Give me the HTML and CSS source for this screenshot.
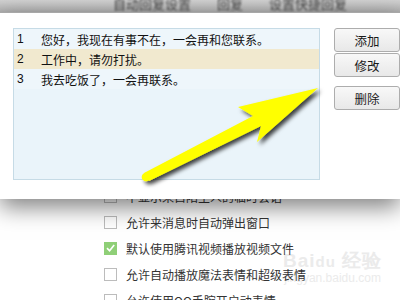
FILE: index.html
```html
<!DOCTYPE html>
<html lang="zh">
<head>
<meta charset="utf-8">
<link rel="stylesheet" href="styles.css">
</head>
<body>
<div class="screen">
  <div class="topbar"><span class="blurtext">自动回复设置　　回复　　设置快捷回复</span></div>
  <div class="dialog">
    <div class="listbox">
      <div class="row"><span class="num">1</span><span class="msg">您好，我现在有事不在，一会再和您联系。</span></div>
      <div class="row sel"><span class="num">2</span><span class="msg">工作中，请勿打扰。</span></div>
      <div class="row"><span class="num">3</span><span class="msg">我去吃饭了，一会再联系。</span></div>
    </div>
    <div class="buttons">
      <div class="btn">添加</div>
      <div class="btn">修改</div>
      <div class="btn gap">删除</div>
    </div>
  </div>
  <div class="page">
    <div class="watermark"><span class="wm1">Bai<b class="du">du</b> 经验</span><span class="wm2">jingyan.baidu.com</span></div>
    <div class="opt"><span class="cb"></span><span>不显示来自陌生人的临时会话</span></div>
    <div class="opt"><span class="cb"></span><span>允许来消息时自动弹出窗口</span></div>
    <div class="opt"><span class="cb on"><svg width="12" height="12" viewBox="0 0 12 12"><path d="M2.2 6.2 L5 9 L10 2.8" fill="none" stroke="#fff" stroke-width="1.8"/></svg></span><span>默认使用腾讯视频播放视频文件</span></div>
    <div class="opt"><span class="cb"></span><span>允许自动播放魔法表情和超级表情</span></div>
    <div class="opt"><span class="cb"></span><span>允许使用QQ手腕开启动表情</span></div>
  </div>
  <svg class="arrow" width="400" height="300" viewBox="0 0 400 300">
    <defs>
      <filter id="sh" x="-20%" y="-20%" width="140%" height="140%">
        <feDropShadow dx="3" dy="3" stdDeviation="2" flood-color="#000" flood-opacity="0.75"/>
      </filter>
    </defs>
    <g filter="url(#sh)" fill="#ffff00">
      <polygon points="318,88 238,107 253,116 144,173 149,181 261,126 257,142"/>
      <circle cx="146" cy="177" r="4.3"/>
    </g>
  </svg>
</div>
</body>
</html>
```
FILE: styles.css
```css
html, body {
  margin: 0;
  padding: 0;
}
body {
  width: 400px;
  height: 300px;
  overflow: hidden;
  background: #fff;
  font-family: "Noto Sans CJK SC", "Liberation Sans", sans-serif;
  font-size: 12px;
}
.screen {
  position: relative;
  width: 400px;
  height: 300px;
  overflow: hidden;
}
.topbar {
  height: 12px;
  background: linear-gradient(#d2d2d2, #b2b2b2);
  overflow: hidden;
  display: flex;
  justify-content: center;
}
.blurtext {
  color: #444;
  font-size: 13px;
  line-height: 8px;
  margin-left: 60px;
  filter: blur(1px);
  white-space: nowrap;
}
.dialog {
  position: relative;
  z-index: 2;
  height: 187px;
  background: #fff;
  box-shadow: 0 8px 22px rgba(0,0,0,0.5);
  display: flex;
  align-items: flex-start;
  padding: 15px 0 0 13px;
  box-sizing: border-box;
  border-top: 1px solid #a8a8a8;
}
.listbox {
  width: 307px;
  height: 150px;
  border: 1px solid #c6dbe6;
  background: #eaf4fa;
  display: flex;
  flex-direction: column;
}
.row {
  height: 20px;
  display: flex;
  align-items: center;
  background: #eef6fb;
  color: #111;
}
.row.sel {
  background: #f1e9cf;
}
.num {
  width: 27px;
  padding-left: 3px;
  box-sizing: border-box;
  font-family: "Liberation Sans", sans-serif;
  font-size: 12px;
}
.msg {
  white-space: nowrap;
}
.buttons {
  margin-left: 14px;
  display: flex;
  flex-direction: column;
  gap: 1px;
}
.btn {
  width: 64px;
  height: 22px;
  border: 1px solid #adadad;
  border-radius: 3px;
  background: linear-gradient(#f8f8f8, #e8e8e8);
  display: flex;
  align-items: center;
  justify-content: center;
  font-size: 12.5px;
  color: #1a1a1a;
}
.btn.gap {
  margin-top: 8px;
}
.page {
  position: relative;
  z-index: 1;
  margin-top: -16px;
  padding-left: 104px;
  color: #333;
  font-size: 12px;
}
.opt {
  position: relative;
  height: 26px;
  display: flex;
  align-items: center;
  gap: 9px;
  white-space: nowrap;
}
.cb {
  width: 11px;
  height: 11px;
  border: 1px solid #bcbcbc;
  background: #fff;
  display: flex;
  align-items: center;
  justify-content: center;
}
.cb.on {
  background: #8fcf77;
  border-color: #8fcf77;
}
.watermark {
  position: absolute;
  left: 283px;
  top: 68px;
  display: flex;
  flex-direction: column;
  align-items: center;
  white-space: nowrap;
  color: #ebebeb;
  font-family: "Liberation Sans", sans-serif;
}
.wm1 {
  font-size: 19px;
  font-weight: bold;
  line-height: 20px;
  letter-spacing: 1px;
}
.du {
  font-size: 15px;
}
.wm2 {
  font-size: 12px;
  line-height: 12px;
}
.arrow {
  position: absolute;
  left: 0;
  top: 0;
  z-index: 3;
  pointer-events: none;
}
```
